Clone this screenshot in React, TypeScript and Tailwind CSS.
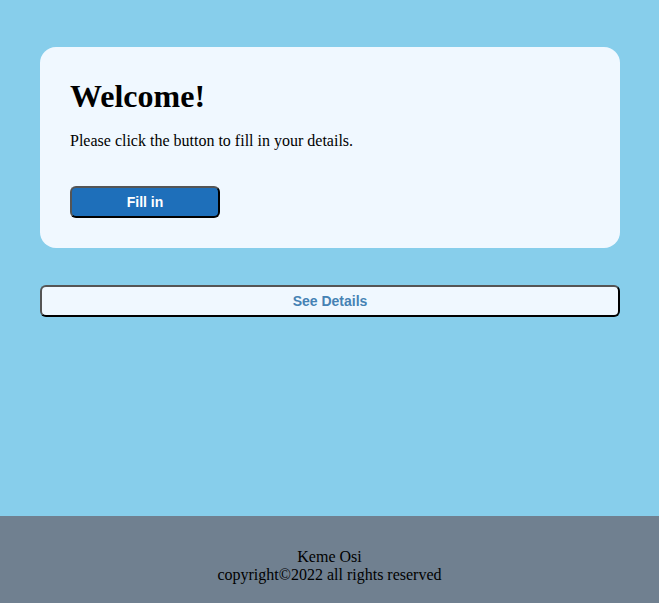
export default function App() {
  return (
    <div className="min-h-screen flex flex-col bg-[#87ceeb] font-['Liberation_Serif',serif] text-black">
      <main className="pl-10 pr-[39px] pt-[47px]">
        <section className="bg-[#f0f8ff] rounded-2xl px-[30px] pt-[31px] pb-[30px]">
          <h1 className="text-[32px] font-bold leading-[36.8px]">Welcome!</h1>
          <p className="mt-[17px] text-base leading-[18.4px]">Please click the button to fill in your details.</p>
          <button className="mt-[36px] w-[150px] h-[32px] rounded-md border-2 border-t-[#555] border-l-[#555] border-b-black border-r-black bg-[#1e6fba] text-white text-sm font-bold font-['Liberation_Sans',sans-serif]">
            Fill in
          </button>
        </section>
        <button className="mt-[37px] w-full h-[32px] rounded-md border-2 border-t-[#555] border-l-[#555] border-b-black border-r-black bg-[#f0f8ff] text-[#4682b4] text-sm font-bold font-['Liberation_Sans',sans-serif]">
          See Details
        </button>
      </main>
      <footer className="mt-auto h-[87px] bg-[#708090] pt-8 text-center text-base leading-[18.4px]">
        <p>Keme Osi</p>
        <p>copyright©2022 all rights reserved</p>
      </footer>
    </div>
  );
}
